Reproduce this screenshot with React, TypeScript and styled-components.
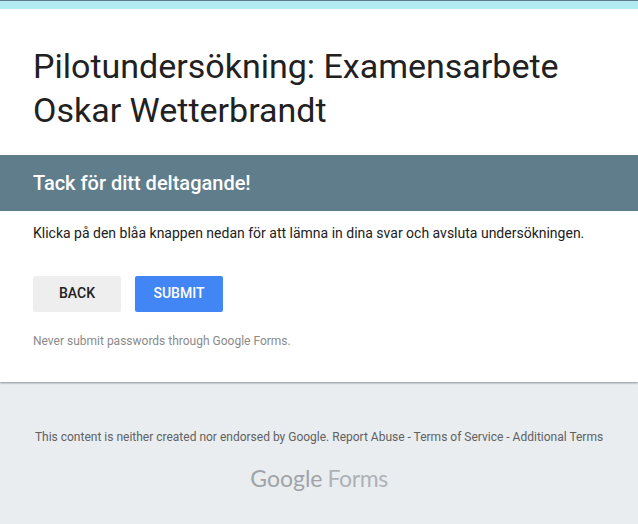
import React from "react";
import styled, { createGlobalStyle } from "styled-components";

const Global = createGlobalStyle`
  html, body { margin: 0; padding: 0; background: #e9ecef; }
  body { font-family: Roboto, "Liberation Sans", sans-serif; }
`;
const Page = styled.div`
  width: 638px;
  height: 524px;
  overflow: hidden;
  background: #e9edf0;
`;
const Card = styled.main`
  background: #fff;
  border-top: 1px solid #607d8b;
  height: 382px;
  box-sizing: border-box;
  box-shadow: 0 1px 2px rgba(0, 0, 0, 0.4);
`;
const Accent = styled.div`
  height: 8px;
  background: #b2ebf2;
`;
const Title = styled.h1`
  margin: 0;
  padding: 35px 33px 23px;
  font-size: 34px;
  line-height: 44px;
  font-weight: 400;
  color: #212121;
`;
const Banner = styled.h2`
  margin: 0;
  height: 56px;
  padding: 0 33px;
  background: #607d8b;
  color: #fff;
  font-size: 20px;
  font-weight: 500;
  line-height: 56px;
`;
const Message = styled.p`
  margin: 0;
  padding: 12px 33px 0;
  font-size: 14px;
  line-height: 20px;
  color: #212121;
`;
const Actions = styled.div`
  display: flex;
  gap: 14px;
  padding: 33px 33px 0;
`;
const Button = styled.button<{ $primary?: boolean }>`
  width: 88px;
  height: 36px;
  border: 0;
  padding: 0 0 2px;
  border-radius: 2px;
  font-family: inherit;
  font-size: 14px;
  font-weight: 500;
  color: ${(p) => (p.$primary ? "#fff" : "#212121")};
  background: ${(p) => (p.$primary ? "#4285f4" : "#eeeeee")};
`;
const Warning = styled.p`
  margin: 0;
  padding: 21px 33px 0;
  font-size: 12px;
  line-height: 16px;
  color: #8a8a8a;
`;
const Footer = styled.footer`
  padding-top: 47px;
  text-align: center;
`;
const Legal = styled.div`
  font-size: 12px;
  line-height: 16px;
  color: #616161;
`;
const Logo = styled.div`
  margin-top: 18px;
  font-family: Lato, sans-serif;
  font-size: 23px;
  line-height: 30px;
  color: #aeb2b6;
  display: flex;
  justify-content: center;
  gap: 5px;
`;
const LogoStrong = styled.span`
  font-weight: 400;
  color: #a0a4a8;
`;
const LogoLight = styled.span`
  letter-spacing: -0.4px;
`;

export default function App() {
  return (
    <Page>
      <Global />
      <Card>
        <Accent />
        <Title>
          Pilotundersökning: Examensarbete
          <br />
          Oskar Wetterbrandt
        </Title>
        <Banner>Tack för ditt deltagande!</Banner>
        <Message>Klicka på den blåa knappen nedan för att lämna in dina svar och avsluta undersökningen.</Message>
        <Actions>
          <Button>BACK</Button>
          <Button $primary>SUBMIT</Button>
        </Actions>
        <Warning>Never submit passwords through Google Forms.</Warning>
      </Card>
      <Footer>
        <Legal>This content is neither created nor endorsed by Google. Report Abuse - Terms of Service - Additional Terms</Legal>
        <Logo>
          <LogoStrong>Google</LogoStrong>
          <LogoLight>Forms</LogoLight>
        </Logo>
      </Footer>
    </Page>
  );
}
